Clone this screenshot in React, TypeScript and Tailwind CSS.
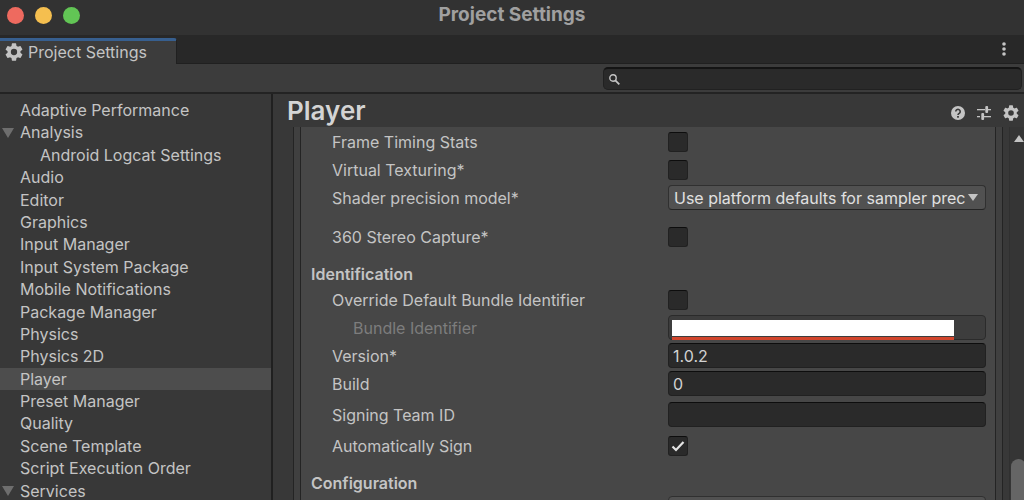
import React from 'react';
import clsx from 'clsx';

type NavItem = { label: string; foldout?: boolean; child?: boolean };

const navItems: NavItem[] = [
  { label: 'Adaptive Performance' },
  { label: 'Analysis', foldout: true },
  { label: 'Android Logcat Settings', child: true },
  { label: 'Audio' },
  { label: 'Editor' },
  { label: 'Graphics' },
  { label: 'Input Manager' },
  { label: 'Input System Package' },
  { label: 'Mobile Notifications' },
  { label: 'Package Manager' },
  { label: 'Physics' },
  { label: 'Physics 2D' },
  { label: 'Player' },
  { label: 'Preset Manager' },
  { label: 'Quality' },
  { label: 'Scene Template' },
  { label: 'Script Execution Order' },
  { label: 'Services', foldout: true },
];

const fieldClass =
  'mb-px h-[25px] w-full rounded border border-[#212121] border-t-[#0d0d0d] bg-[#2a2a2a] px-1 text-base text-[#d2d2d2] outline-none';

function GearIcon({ className }: { className?: string }) {
  return (
    <svg viewBox="2 2 20 20" fill="currentColor" className={className} aria-hidden="true">
      <path d="M19.14 12.94c.04-.3.06-.61.06-.94s-.02-.64-.07-.94l2.03-1.58a.49.49 0 0 0 .12-.61l-1.92-3.32a.49.49 0 0 0-.59-.22l-2.39.96a7 7 0 0 0-1.62-.94l-.36-2.54a.48.48 0 0 0-.48-.41h-3.84a.48.48 0 0 0-.47.41l-.36 2.54c-.59.24-1.13.57-1.62.94l-2.39-.96a.48.48 0 0 0-.59.22L2.74 8.87a.48.48 0 0 0 .12.61l2.03 1.58c-.05.3-.09.63-.09.94s.02.64.07.94l-2.03 1.58a.49.49 0 0 0-.12.61l1.92 3.32c.12.22.37.29.59.22l2.39-.96c.5.38 1.03.7 1.62.94l.36 2.54c.05.24.24.41.48.41h3.84c.24 0 .44-.17.47-.41l.36-2.54a6.8 6.8 0 0 0 1.62-.94l2.39.96c.22.08.47 0 .59-.22l1.92-3.32a.48.48 0 0 0-.12-.61zM12 15.5a3.5 3.5 0 1 1 0-7 3.5 3.5 0 0 1 0 7z" />
    </svg>
  );
}

function HelpIcon() {
  return (
    <svg viewBox="0 0 14 14" className="h-[14px] w-[14px]" aria-hidden="true">
      <circle cx="7" cy="7" r="7" fill="#c4c4c4" />
      <path d="M4.8 5.6a2.2 2.2 0 1 1 3.4 1.8c-.8.5-1.2.8-1.2 1.6" fill="none" stroke="#383838" strokeWidth="1.6" />
      <rect x="6.1" y="10" width="1.8" height="1.7" fill="#383838" />
    </svg>
  );
}

function PresetIcon() {
  return (
    <svg viewBox="0 0 14 14" className="h-[14px] w-[14px]" fill="#c4c4c4" aria-hidden="true">
      <rect x="0" y="3" width="8" height="1.3" />
      <rect x="8.3" y="0" width="2.8" height="7" rx="1" />
      <rect x="10" y="3" width="4" height="1.3" />
      <rect x="0" y="10" width="3" height="1.3" />
      <rect x="4.3" y="7" width="2.8" height="7" rx="1" />
      <rect x="6" y="10" width="8" height="1.3" />
    </svg>
  );
}

function Triangle({ className, up }: { className?: string; up?: boolean }) {
  return (
    <svg viewBox="0 0 12 10" preserveAspectRatio="none" fill="currentColor" className={className} aria-hidden="true">
      <path d={up ? 'M0 10L6 0L12 10Z' : 'M0 0H12L6 10Z'} />
    </svg>
  );
}

type RowProps = { id: string; label: string; className?: string; dimmed?: boolean; children: React.ReactNode };

function Row({ id, label, className, dimmed, children }: RowProps) {
  return (
    <div className={clsx('flex h-7 items-center', className)}>
      <label
        htmlFor={id}
        className={clsx('w-[357px] shrink-0', dimmed ? 'pl-[42px] text-[#7d7d7d]' : 'pl-[21px]')}
      >
        {label}
      </label>
      <div className="flex min-w-0 flex-1 items-center">{children}</div>
    </div>
  );
}

function Checkbox({ id, defaultChecked }: { id: string; defaultChecked?: boolean }) {
  return (
    <span className="relative flex">
      <input
        id={id}
        type="checkbox"
        defaultChecked={defaultChecked}
        className="peer h-5 w-5 appearance-none rounded-[3px] border border-[#212121] border-t-[#0d0d0d] bg-[#2a2a2a]"
      />
      <svg
        viewBox="0 0 20 20"
        className="pointer-events-none absolute inset-0 hidden h-5 w-5 peer-checked:block"
        fill="none"
        stroke="#e4e4e4"
        strokeWidth="2.2"
        aria-hidden="true"
      >
        <path d="M4.5 10.5L8 14L15.5 6" />
      </svg>
    </span>
  );
}

function Sidebar() {
  const [selected, setSelected] = React.useState('Player');

  return (
    <nav className="w-[273px] shrink-0 overflow-hidden border-r-2 border-[#202020] bg-[#383838] pt-[5px]">
      <ul>
        {navItems.map((item) => (
          <li key={item.label}>
            <button
              onClick={() => setSelected(item.label)}
              className={clsx(
                'flex w-full items-center text-left text-base leading-[1.4]',
                item.child && 'pl-5',
                selected === item.label && 'bg-[#4d4d4d]'
              )}
            >
              <span className="w-5 shrink-0 pl-[2px]">
                {item.foldout && <Triangle className="h-[10px] w-3 text-[#6e6e6e]" />}
              </span>
              {item.label}
            </button>
          </li>
        ))}
      </ul>
    </nav>
  );
}

function PlayerSettings() {
  return (
    <div className="min-w-0 flex-1 overflow-hidden border-x border-[#242424] bg-[#404040] px-[6px]">
      <div className="min-h-full border-x border-[#242424] bg-[#474747] pl-[10px] pr-[9px] pt-px">
        <Row id="frame-timing" label="Frame Timing Stats">
          <Checkbox id="frame-timing" />
        </Row>
        <Row id="virtual-texturing" label="Virtual Texturing*">
          <Checkbox id="virtual-texturing" />
        </Row>
        <Row id="shader-precision" label="Shader precision model*">
          <div className="relative mb-px w-full">
            <select
              id="shader-precision"
              className="block h-[25px] w-full appearance-none rounded border border-[#303030] border-b-[#242424] bg-[#515151] pl-[5px] pr-5 text-base text-[#e0e0e0] outline-none"
            >
              <option>Use platform defaults for sampler precision</option>
              <option>Use full sampler precision by default</option>
            </select>
            <Triangle className="pointer-events-none absolute right-2 top-[9px] h-[7px] w-[10px]" />
          </div>
        </Row>
        <Row id="stereo-capture" label="360 Stereo Capture*" className="mt-[11px]">
          <Checkbox id="stereo-capture" />
        </Row>

        <h2 className="mt-[11px] font-semibold leading-6">Identification</h2>
        <Row id="override-bundle" label="Override Default Bundle Identifier">
          <Checkbox id="override-bundle" />
        </Row>
        <Row id="bundle-id" label="Bundle Identifier" dimmed>
          <div className="mb-px flex h-[25px] w-full items-start rounded border border-[#2b2b2b] bg-[#3d3d3d] pl-[3px] pt-1">
            <div className="w-[90%] border-b-[3px] border-[#d2452c] pb-px">
              <input id="bundle-id" disabled className="block h-4 w-full bg-white" />
            </div>
          </div>
        </Row>
        <Row id="version" label="Version*">
          <input id="version" defaultValue="1.0.2" className={fieldClass} />
        </Row>
        <Row id="build" label="Build">
          <input id="build" defaultValue="0" className={fieldClass} />
        </Row>
        <Row id="team-id" label="Signing Team ID" className="mt-[3px]">
          <input id="team-id" className={fieldClass} />
        </Row>
        <Row id="auto-sign" label="Automatically Sign" className="mt-[3px]">
          <Checkbox id="auto-sign" defaultChecked />
        </Row>

        <h2 className="mt-[11px] font-semibold leading-6">Configuration</h2>
        <div className="flex h-7 items-center pl-[357px]">
          <select
            aria-label="Configuration"
            className="mb-px h-[25px] w-full appearance-none rounded border border-[#303030] bg-[#515151]"
          />
        </div>
      </div>
    </div>
  );
}

export default function App() {
  return (
    <div className="flex h-screen flex-col overflow-hidden bg-[#383838] font-['Inter',sans-serif] text-base text-[#c4c4c4]">
      <header className="relative flex h-[35px] shrink-0 items-center justify-center bg-[#323232] pb-[6px]">
        <div className="absolute left-[7px] top-[7px] flex gap-[11px]">
          <button aria-label="Close" className="h-[17px] w-[17px] rounded-full bg-[#ee6a5f]" />
          <button aria-label="Minimize" className="h-[17px] w-[17px] rounded-full bg-[#f5bf4f]" />
          <button aria-label="Zoom" className="h-[17px] w-[17px] rounded-full bg-[#62c555]" />
        </div>
        <h1 className="text-[19px] font-bold leading-7 text-[#a0a0a0]">Project Settings</h1>
      </header>

      <div className="flex h-[29px] shrink-0 items-end justify-between bg-[#282828]">
        <button className="flex h-[26px] w-[177px] items-center gap-[5px] rounded-tr-[3px] border-r border-t-[3px] border-r-[#202020] border-t-[#375f8f] bg-[#3c3c3c] pb-[2px] pl-[5px]">
          <GearIcon className="h-[18px] w-[18px]" />
          Project Settings
        </button>
        <div className="flex h-full flex-1 items-center justify-end border-b border-[#202020] pr-[18px]">
          <button aria-label="More">
            <svg viewBox="0 0 4 14" className="h-[14px] w-1" fill="currentColor" aria-hidden="true">
              <circle cx="2" cy="2" r="1.8" />
              <circle cx="2" cy="7" r="1.8" />
              <circle cx="2" cy="12" r="1.8" />
            </svg>
          </button>
        </div>
      </div>

      <div className="flex h-[30px] shrink-0 justify-end border-b-2 border-[#232323] bg-[#3c3c3c] pr-[2px] pt-[3px]">
        <div className="relative w-[41%]">
          <input
            type="search"
            aria-label="Search"
            className="block h-[23px] w-full rounded-[5px] border border-[#212121] border-t-2 border-t-[#141414] bg-[#2a2a2a] pl-6 outline-none"
          />
          <svg
            viewBox="0 0 11 11"
            className="absolute left-[6px] top-[7px] h-[11px] w-[11px]"
            fill="none"
            stroke="currentColor"
            aria-hidden="true"
          >
            <circle cx="4" cy="4" r="3.2" strokeWidth="1.4" />
            <path d="M6.3 6.3L10.3 10.3" strokeWidth="1.8" />
          </svg>
        </div>
      </div>

      <div className="flex min-h-0 flex-1">
        <Sidebar />
        <main className="flex min-w-0 flex-1 flex-col">
          <div className="flex h-[33px] shrink-0 items-center justify-between pl-[14px] pr-[5px]">
            <h1 className="text-[26px] font-semibold leading-8 text-[#d4d4d4]">Player</h1>
            <div className="flex items-center gap-3 pt-[5px]">
              <button aria-label="Help">
                <HelpIcon />
              </button>
              <button aria-label="Presets">
                <PresetIcon />
              </button>
              <button aria-label="Settings">
                <GearIcon className="h-4 w-4" />
              </button>
            </div>
          </div>
          <div className="flex min-h-0 flex-1 pl-5">
            <PlayerSettings />
            <div className="ml-[6px] flex w-[15px] shrink-0 flex-col items-end justify-between overflow-hidden border-l border-[#303030] bg-[#353535] pt-2">
              <Triangle up className="h-[7px] w-[10px]" />
              <div className="-mr-[2px] h-[41px] w-[15px] rounded-t-full bg-[#656565]" />
            </div>
          </div>
        </main>
      </div>
    </div>
  );
}
